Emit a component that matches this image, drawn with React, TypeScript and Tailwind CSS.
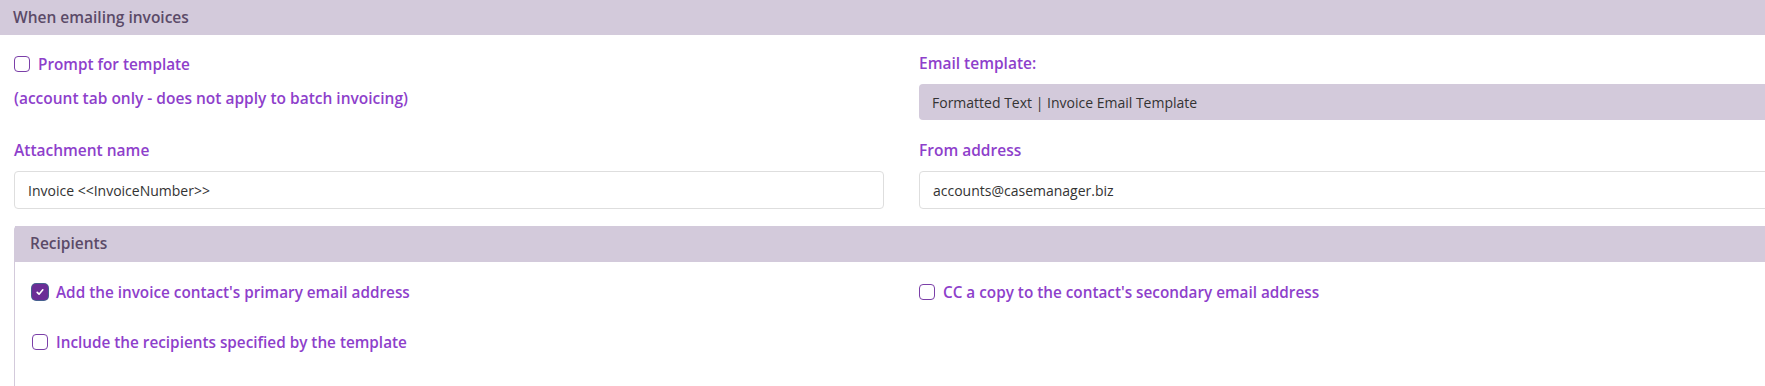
import type React from "react";

const font = { fontFamily: '"Open Sans", "Noto Sans", Arial, sans-serif' };

function Checkbox({ checked }: { checked?: boolean }) {
  if (checked) {
    return (
      <span className="flex h-[16px] w-[16px] shrink-0 items-center justify-center rounded-[4px] bg-[#6b2d96] ring-1 ring-[#46608f]">
        <svg viewBox="0 0 16 16" className="h-[10px] w-[10px]" fill="none">
          <path d="M3.5 8.5l3 3 6-7" stroke="#fff" strokeWidth="2.6" strokeLinecap="round" strokeLinejoin="round" />
        </svg>
      </span>
    );
  }
  return <span className="block h-[16px] w-[16px] shrink-0 rounded-[4px] border-[1.5px] border-[#7b3fa8] bg-white" />;
}

function CheckRow({ label, checked }: { label: string; checked?: boolean }) {
  return (
    <label className="flex h-[20px] items-center gap-[8px] text-[15.3px] font-semibold text-[#8e3fcb]">
      <Checkbox checked={checked} />
      <span>{label}</span>
    </label>
  );
}

function Label({ children }: { children: React.ReactNode }) {
  return <div className="flex h-[20px] items-center text-[15.5px] font-semibold text-[#8e3fcb]">{children}</div>;
}

export default function App() {
  return (
    <div className="h-[386px] w-full overflow-hidden bg-white" style={font}>
      <div className="w-[1803px]">
        {/* Section header */}
        <div className="flex h-[35px] items-center bg-[#d3cadb] px-[13px] text-[15.5px] font-semibold text-[#5b4a68]">
          When emailing invoices
        </div>

        <div className="grid grid-cols-2 gap-x-[35px] px-[14px]">
          {/* Row 1 */}
          <div className="flex flex-col">
            <div className="mt-[19px]">
              <CheckRow label="Prompt for template" />
            </div>
            <div className="mt-[15px]">
              <Label>(account tab only - does not apply to batch invoicing)</Label>
            </div>
          </div>
          <div className="flex flex-col">
            <div className="mt-[19px]">
              <Label>Email template:</Label>
            </div>
            <div className="mt-[10px] flex h-[36px] items-center rounded-[4px] bg-[#d3cadb] px-[13px] text-[14px] text-[#333333]">
              Formatted Text | Invoice Email Template
            </div>
          </div>

          {/* Row 2 */}
          <div className="flex flex-col">
            <div className="mt-[21px]">
              <Label>Attachment name</Label>
            </div>
            <div className="mt-[10px] flex h-[38px] items-center rounded-[4px] border border-[#dedede] bg-white px-[13px] text-[14px] text-[#333333]">
              Invoice &lt;&lt;InvoiceNumber&gt;&gt;
            </div>
          </div>
          <div className="flex flex-col">
            <div className="mt-[21px]">
              <Label>From address</Label>
            </div>
            <div className="mt-[10px] flex h-[38px] items-center rounded-[4px] border border-[#dedede] bg-white px-[13px] text-[14px] text-[#333333]">
              accounts@casemanager.biz
            </div>
          </div>
        </div>

        {/* Recipients */}
        <div className="mx-[14px] mt-[17px] h-[200px] rounded-t-[4px] border-x border-[#d3cadb]">
          <div className="flex h-[36px] items-center bg-[#d3cadb] px-[15px] text-[15.5px] font-semibold text-[#5b4a68]">
            Recipients
          </div>
          <div className="grid grid-cols-2 gap-x-[35px] gap-y-[30px] px-[17px] pt-[20px]">
            <CheckRow label="Add the invoice contact's primary email address" checked />
            <CheckRow label="CC a copy to the contact's secondary email address" />
            <CheckRow label="Include the recipients specified by the template" />
          </div>
        </div>
      </div>
    </div>
  );
}
